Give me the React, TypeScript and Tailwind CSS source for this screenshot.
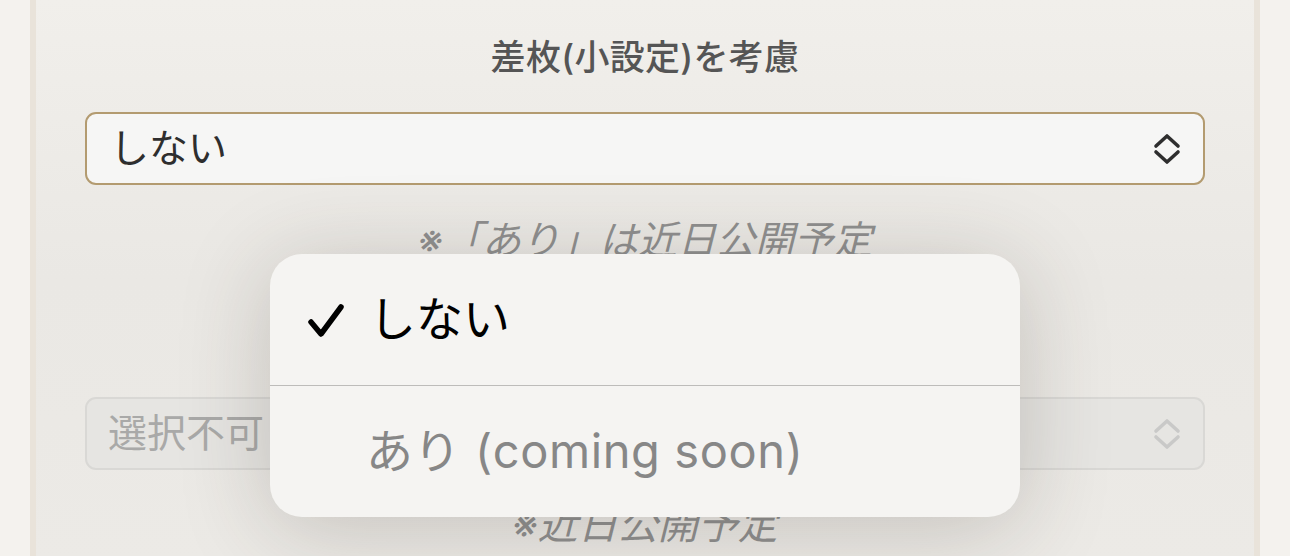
import React from 'react';

const FONT = "font-['Inter','Noto_Sans_CJK_JP',sans-serif]";

function UpDown({ className }: { className: string }) {
  return (
    <svg viewBox="0 0 28 32" className={className} fill="none" stroke="currentColor" strokeWidth={3.6} strokeLinecap="round" strokeLinejoin="round">
      <path d="M3 13 L14 3 L25 13" />
      <path d="M3 19 L14 29 L25 19" />
    </svg>
  );
}

function Check() {
  return (
    <svg viewBox="0 0 40 36" className="w-[40px] h-[36px] text-black" fill="none" stroke="currentColor" strokeWidth={5.5} strokeLinecap="round" strokeLinejoin="round">
      <path d="M5 20 L15 32 L35 5" />
    </svg>
  );
}

export default function App() {
  return (
    <div className={`relative w-full h-[556px] overflow-hidden bg-[#f4f2ee] px-[30px] ${FONT}`}>
      {/* Card */}
      <div className="h-full border-x-[6px] border-[#e9e3da] bg-gradient-to-b from-[#f1efeb] via-[#eae8e4] to-[#eceae6] px-[49px] pt-[32px] flex flex-col">
        <h2 className="text-center text-[35px] leading-[50px] font-medium text-[#555] tracking-[0.3px]">
          差枚(小設定)を考慮
        </h2>

        {/* Active select */}
        <div className="mt-[30px] h-[73px] rounded-[11px] border-2 border-[#b39b70] bg-[#f6f6f5] flex items-center justify-between pl-[23px] pr-[22px]">
          <span className="text-[39px] text-[#2e2e2e]">しない</span>
          <UpDown className="w-[28px] h-[32px] text-[#2e2e2e]" />
        </div>

        <p className="mt-[30px] text-center text-[39px] leading-[50px] italic text-[#8f8f8f]">
          ※「あり」は近日公開予定
        </p>

        {/* Disabled select */}
        <div className="mt-[132px] h-[73px] rounded-[11px] border-2 border-[#d9d8d5] bg-[#e6e5e2] flex items-center justify-between pl-[21px] pr-[22px]">
          <span className="text-[39px] text-[#a9a9a8]">選択不可</span>
          <UpDown className="w-[28px] h-[32px] text-[#c9c9c8]" />
        </div>

        <p className="mt-[30px] text-center text-[40px] leading-[50px] italic text-[#8f8f8f]">
          ※近日公開予定
        </p>
      </div>

      {/* Dropdown menu */}
      <div className="absolute left-[270px] top-[254px] w-[750px] rounded-[32px] bg-[#f5f4f2] shadow-[0_12px_90px_rgba(60,50,40,0.22)] overflow-hidden">
        <div className="h-[131px] flex items-center pl-[36px]">
          <Check />
          <span className="ml-[23px] text-[47px] text-black">しない</span>
        </div>
        <div className="h-px bg-[#bdbcba]" />
        <div className="h-[131px] flex items-center pl-[96px]">
          <span className="text-[47px] tracking-[0.6px] text-[#878787]">あり (coming soon)</span>
        </div>
      </div>
    </div>
  );
}
